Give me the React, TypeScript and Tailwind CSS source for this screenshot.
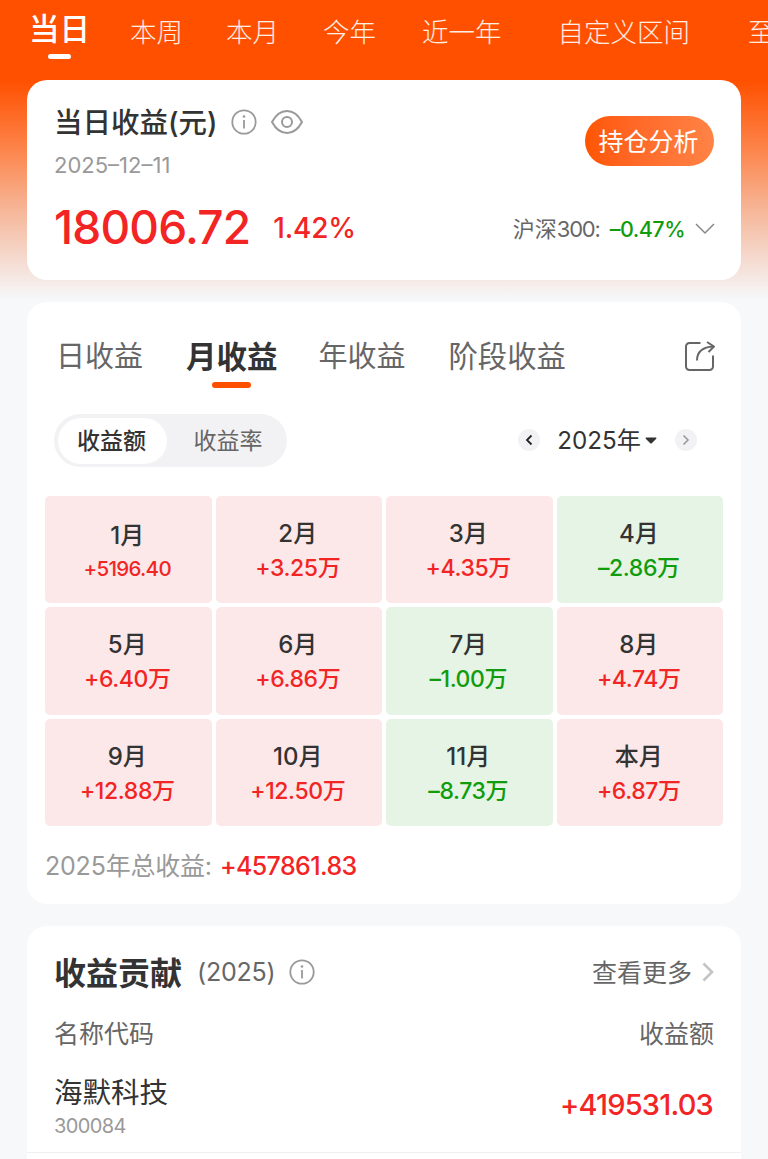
import React from 'react';

interface MonthProfit {
  label: string;
  value: string;
}

const PERIODS = [
  { label: '本周', className: 'ml-[40px]' },
  { label: '本月', className: 'ml-[43px]' },
  { label: '今年', className: 'ml-[44px]' },
  { label: '近一年', className: 'ml-[46px]' },
  { label: '自定义区间', className: 'ml-[56px]' },
  { label: '至今', className: 'ml-[58px]' },
];

const MONTHS: MonthProfit[] = [
  { label: '1月', value: '+5196.40' },
  { label: '2月', value: '+3.25万' },
  { label: '3月', value: '+4.35万' },
  { label: '4月', value: '–2.86万' },
  { label: '5月', value: '+6.40万' },
  { label: '6月', value: '+6.86万' },
  { label: '7月', value: '–1.00万' },
  { label: '8月', value: '+4.74万' },
  { label: '9月', value: '+12.88万' },
  { label: '10月', value: '+12.50万' },
  { label: '11月', value: '–8.73万' },
  { label: '本月', value: '+6.87万' },
];

const InfoIcon: React.FC<{ className?: string }> = ({ className }) => (
  <svg className={className} width="26" height="26" viewBox="0 0 26 26" fill="none" stroke="#999" strokeWidth="1.8">
    <circle cx="13" cy="13" r="11.7" />
    <path d="M13 11v8.5" />
    <circle cx="13" cy="7.5" r="1.3" fill="#999" stroke="none" />
  </svg>
);

const EyeIcon: React.FC<{ className?: string }> = ({ className }) => (
  <svg className={className} width="34" height="26" viewBox="0 0 34 26" fill="none" stroke="#999" strokeWidth="2">
    <path d="M2 13C5.5 6.5 10.5 2 17 2s11.500 4.500 15 11c-3.500 6.500-8.500 11-15 11S5.500 19.500 2 13z" strokeLinejoin="round" />
    <circle cx="17" cy="13" r="5" />
  </svg>
);

const ShareIcon: React.FC = () => (
  <svg width="32" height="32" viewBox="0 0 32 32" fill="none" stroke="#666" strokeWidth="2" strokeLinejoin="round">
    <path d="M16.500 3H5.500A3.500 3.500 0 0 0 2 6.500v20A3.500 3.500 0 0 0 5.500 30h20a3.500 3.500 0 0 0 3.500-3.500V15.500" />
    <path d="M13 20.500C13 12.500 18 7 29.500 6.500" />
    <path d="M23 2l7 4.500-5.500 5.500" />
  </svg>
);

const PeriodTabs: React.FC = () => (
  <nav className="flex h-20 items-start overflow-hidden whitespace-nowrap pl-[29px] pt-[9px]">
    <div className="flex shrink-0 flex-col items-center">
      <span className="text-[30.500px] font-medium leading-10 text-white">当日</span>
      <span className="mt-[5px] h-[5px] w-[23px] rounded-full bg-white" />
    </div>
    {PERIODS.map((p) => (
      <span key={p.label} className={`shrink-0 pt-[3px] text-[26.500px] font-light leading-10 text-white/90 ${p.className}`}>
        {p.label}
      </span>
    ))}
  </nav>
);

const SummaryCard: React.FC = () => (
  <section className="flex h-[200px] justify-between rounded-[20px] bg-white pl-[27px] pr-[26px]">
    <div className="flex flex-col whitespace-nowrap">
      <div className="mt-[22px] flex h-10 items-center">
        <h1 className="pt-[3px] text-[28.500px] font-medium text-[#333]">当日收益(元)</h1>
        <InfoIcon className="ml-[13px]" />
        <EyeIcon className="ml-[13px]" />
      </div>
      <p className="mt-[8px] text-[22px] leading-[31px] text-[#999]">2025–12–11</p>
      <div className="mt-[19px] flex items-center leading-[50px] text-[#f22424]">
        <span className="text-[46px] font-medium tracking-[-0.8px]">18006.72</span>
        <span className="ml-[23px] pt-[3px] text-[28px] font-medium tracking-[-0.2px]">1.42%</span>
      </div>
    </div>
    <div className="flex flex-col items-end whitespace-nowrap">
      <button className="mr-[1px] mt-9 h-[50px] w-[129px] rounded-full bg-linear-to-r from-[#ff5500] to-[#ff8345] pr-[2px] pt-[3px] text-[25px] text-white">
        持仓分析
      </button>
      <div className="mt-[43px] flex h-10 items-center text-[22px]">
        <span className="text-[#666]">
          沪深<span className="tracking-[-1.2px]">300:</span>
        </span>
        <span className="ml-[10px] text-[21.500px] font-medium tracking-[-0.5px] text-[#109c0c]">–0.47%</span>
        <svg className="ml-[10px]" width="20" height="12" viewBox="0 0 20 12" fill="none" stroke="#888" strokeWidth="1.5">
          <path d="M1 1l9 9 9-9" />
        </svg>
      </div>
    </div>
  </section>
);

const MonthCell: React.FC<MonthProfit> = ({ label, value }) => {
  const up = value.startsWith('+');
  const small = !value.endsWith('万');
  return (
    <div className={`flex flex-col items-center justify-center rounded-[5px] pr-[2px] pt-[3px] ${up ? 'bg-[#fce8e8]' : 'bg-[#e5f4e5]'}`}>
      <span className="text-[24px] font-medium leading-[35px] text-[#333]">{label}</span>
      <span
        className={`font-medium ${small ? 'text-[20.500px] leading-[31px] tracking-[-0.7px]' : 'text-[23px] leading-[35px] tracking-[-0.4px]'} ${up ? 'text-[#f22424]' : 'text-[#109c0c]'}`}
      >
        {value}
      </span>
    </div>
  );
};

const CalendarCard: React.FC = () => (
  <section className="mt-[22px] h-[602px] whitespace-nowrap rounded-[20px] bg-white">
    <div className="flex h-[112px] items-start pl-[29px] pr-[25px] pt-[34px] text-[29px] leading-[42px] text-[#666]">
      <span>日收益</span>
      <div className="ml-[43px] flex flex-col items-center">
        <span className="text-[30.500px] font-bold text-[#333]">月收益</span>
        <span className="mt-[4px] h-[6px] w-[39px] rounded-full bg-[#ff5000]" />
      </div>
      <span className="ml-[41px]">年收益</span>
      <span className="ml-[43px] text-[29.300px]">阶段收益</span>
      <span className="ml-auto mt-[4px]">
        <ShareIcon />
      </span>
    </div>
    <div className="flex h-[53px] items-center pl-[27px] pr-[44px] text-[23px]">
      <div className="flex h-[53px] w-[233px] items-center rounded-full bg-[#f2f2f4] p-1">
        <span className="flex h-[46px] w-[109px] items-center justify-center rounded-full bg-white pr-[2px] pt-[2px] font-medium text-[#333]">收益额</span>
        <span className="flex-1 pl-[6px] pt-[2px] text-center text-[#666]">收益率</span>
      </div>
      <div className="ml-auto flex items-center">
        <span className="flex size-[22px] items-center justify-center rounded-full bg-[#f2f2f4]">
          <svg width="8" height="12" viewBox="0 0 8 12" fill="none" stroke="#222" strokeWidth="1.8">
            <path d="M6.500 1.500L2 6l4.500 4.500" />
          </svg>
        </span>
        <span className="ml-[17px] pt-px text-[24.200px] text-[#333]">2025年</span>
        <svg className="ml-1" width="12" height="7" viewBox="0 0 12 7" fill="#333">
          <path d="M1 .5h10q1 .5 0 1.500L7 6q-1 1-2 0L1 2Q0 1 1 .5z" />
        </svg>
        <span className="ml-[18px] flex size-[22px] items-center justify-center rounded-full bg-[#f2f2f4]">
          <svg width="8" height="12" viewBox="0 0 8 12" fill="none" stroke="#999" strokeWidth="1.6">
            <path d="M1.500 1.500L6 6l-4.500 4.500" />
          </svg>
        </span>
      </div>
    </div>
    <div className="mx-[18px] mt-[29px] grid h-[330px] grid-cols-4 grid-rows-3 gap-1">
      {MONTHS.map((m) => (
        <MonthCell key={m.label} {...m} />
      ))}
    </div>
    <div className="mt-[21px] flex h-10 items-center pl-[18px] text-[25px]">
      <span className="tracking-[-0.2px] text-[#999]">2025年总收益:</span>
      <span className="ml-[8px] font-medium tracking-[-0.6px] text-[#f22424]">+457861.83</span>
    </div>
  </section>
);

const ContributionCard: React.FC = () => (
  <section className="mt-[22px] h-[260px] whitespace-nowrap rounded-t-[20px] bg-white">
    <div className="flex h-[227px] flex-col border-b border-[#f0f0f2] px-[27px]">
      <div className="mt-[26px] flex h-10 items-center">
        <h2 className="pt-[3px] text-[32px] font-bold text-[#333]">收益贡献</h2>
        <span className="ml-[15px] pt-[2px] text-[25px] tracking-[-0.2px] text-[#666]">(2025)</span>
        <InfoIcon className="ml-[13px]" />
        <span className="ml-auto pt-[3px] text-[25px] text-[#666]">查看更多</span>
        <svg className="ml-[10px]" width="12" height="20" viewBox="0 0 12 20" fill="none" stroke="#c4c4c4" strokeWidth="2.600">
          <path d="M1.500 1.500L10 10l-8.500 8.500" />
        </svg>
      </div>
      <div className="mt-[23px] flex h-10 items-center justify-between text-[25px] text-[#666]">
        <span>名称代码</span>
        <span>收益额</span>
      </div>
      <div className="mt-[18px] flex justify-between">
        <div className="flex flex-col">
          <span className="text-[28.500px] leading-10 text-[#333]">海默科技</span>
          <span className="text-[20px] leading-[27px] tracking-[-0.6px] text-[#999]">300084</span>
        </div>
        <span className="mr-px mt-[12px] text-[29px] font-medium leading-10 tracking-[-0.8px] text-[#f22424]">+419531.03</span>
      </div>
    </div>
  </section>
);

export default function App() {
  return (
    <div
      className="h-[1159px] w-full overflow-hidden bg-[#f6f8fa] bg-[linear-gradient(to_bottom,#ff5000_0px,#ff5000_80px,#fd8146_145px,#f6b698_210px,#f5e2db_270px,#f6f8fa_300px)]"
      style={{ fontFamily: 'Inter, "Noto Sans CJK SC", sans-serif' }}
    >
      <PeriodTabs />
      <main className="px-[27px]">
        <SummaryCard />
        <CalendarCard />
        <ContributionCard />
      </main>
    </div>
  );
}
